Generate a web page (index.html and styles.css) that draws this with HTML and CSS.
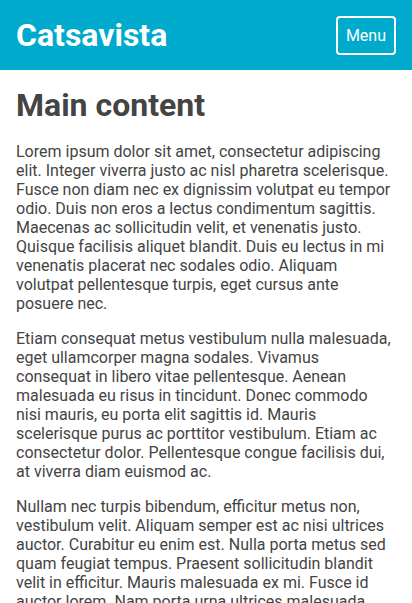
FILE: index.html
```html
<!DOCTYPE html>
<html lang="en">
<head>
<meta charset="utf-8">
<meta name="viewport" content="width=device-width, initial-scale=1">
<title>Catsavista</title>
<link rel="stylesheet" href="styles.css">
</head>
<body>
<header class="site-header">
  <div class="brand">Catsavista</div>
  <button class="menu-btn" type="button">Menu</button>
</header>
<main class="content">
  <h1 class="title">Main content</h1>
  <p class="para">Lorem ipsum dolor sit amet, consectetur adipiscing elit. Integer viverra justo ac nisl pharetra scelerisque. Fusce non diam nec ex dignissim volutpat eu tempor odio. Duis non eros a lectus condimentum sagittis. Maecenas ac sollicitudin velit, et venenatis justo. Quisque facilisis aliquet blandit. Duis eu lectus in mi venenatis placerat nec sodales odio. Aliquam volutpat pellentesque turpis, eget cursus ante posuere nec.</p>
  <p class="para">Etiam consequat metus vestibulum nulla malesuada, eget ullamcorper magna sodales. Vivamus consequat in libero vitae pellentesque. Aenean malesuada eu risus in tincidunt. Donec commodo nisi mauris, eu porta elit sagittis id. Mauris scelerisque purus ac porttitor vestibulum. Etiam ac consectetur dolor. Pellentesque congue facilisis dui, at viverra diam euismod ac.</p>
  <p class="para">Nullam nec turpis bibendum, efficitur metus non, vestibulum velit. Aliquam semper est ac nisi ultrices auctor. Curabitur eu enim est. Nulla porta metus sed quam feugiat tempus. Praesent sollicitudin blandit velit in efficitur. Mauris malesuada ex mi. Fusce id auctor lorem. Nam porta urna ultrices malesuada pretium. Sed vitae nisl quis lectus volutpat aliquet.</p>
</main>
</body>
</html>
```
FILE: styles.css
```css
* { box-sizing: border-box; }
html, body { margin: 0; padding: 0; }
body {
  font-family: Roboto, "Noto Sans", sans-serif;
  color: #444;
  background: #fff;
  font-size: 16px;
  line-height: normal;
}
.site-header {
  background: #00aacc;
  display: flex;
  align-items: center;
  justify-content: space-between;
  padding: 16px;
  height: 70px;
}
.brand {
  color: #fff;
  font-weight: 700;
  font-size: 32px;
}
.menu-btn {
  font-family: Roboto, "Noto Sans", sans-serif;
  font-size: 16px;
  color: #fff;
  background: transparent;
  border: 2px solid #fff;
  border-radius: 4px;
  padding: 8px 8px;
  line-height: normal;
  cursor: pointer;
}
.content {
  padding: 0 16px;
}
.title {
  font-size: 32px;
  font-weight: 700;
  margin: 16px 0 18px;
}
.para {
  margin: 0 0 16px;
}
```
